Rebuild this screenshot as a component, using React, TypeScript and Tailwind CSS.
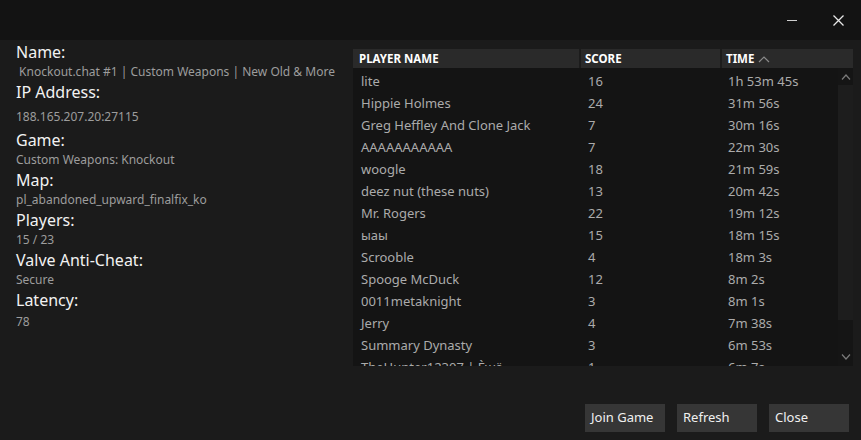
import React from "react";

const players: [string, number, string][] = [
  ["lite", 16, "1h 53m 45s"],
  ["Hippie Holmes", 24, "31m 56s"],
  ["Greg Heffley And Clone Jack", 7, "30m 16s"],
  ["AAAAAAAAAAA", 7, "22m 30s"],
  ["woogle", 18, "21m 59s"],
  ["deez nut (these nuts)", 13, "20m 42s"],
  ["Mr. Rogers", 22, "19m 12s"],
  ["ыаы", 15, "18m 15s"],
  ["Scrooble", 4, "18m 3s"],
  ["Spooge McDuck", 12, "8m 2s"],
  ["0011metaknight", 3, "8m 1s"],
  ["Jerry", 4, "7m 38s"],
  ["Summary Dynasty", 3, "6m 53s"],
  ["TheHunter12307 | Ѐѡӧ", 1, "6m 7s"],
];

const info: [string, string][] = [
  ["Name:", "\u00a0Knockout.chat #1 | Custom Weapons | New Old & More"],
  ["IP Address:", "188.165.207.20:27115"],
  ["Game:", "Custom Weapons: Knockout"],
  ["Map:", "pl_abandoned_upward_finalfix_ko"],
  ["Players:", "15 / 23"],
  ["Valve Anti-Cheat:", "Secure"],
  ["Latency:", "78"],
];

function InfoPanel() {
  return (
    <div className="w-[353px] shrink-0 pl-[16px] pt-[2px] flex flex-col">
      {info.map(([label, value], i) => (
        <div key={label} className="flex flex-col">
          <div className="text-[16px] leading-[20px] text-[#f2f2f2]">{label}</div>
          <div
            className={`text-[12px] leading-[20px] text-[#9d9d9d] whitespace-nowrap ${
              i === 1 ? "mt-[5px] mb-[3px]" : ""
            } ${i === 6 ? "mt-[2px]" : ""}`}
          >
            {value}
          </div>
        </div>
      ))}
    </div>
  );
}

function PlayerTable() {
  return (
    <div className="w-[500px] shrink-0 mt-[9px] h-[317px] flex flex-col bg-[#141414]">
      <div className="flex h-[19px] bg-[#2a2a2a] text-[11.5px] font-bold text-white leading-[19px]">
        <div className="w-[228px] pl-[6px] border-r-2 border-[#1c1c1c]">PLAYER NAME</div>
        <div className="w-[141px] pl-[4px] border-r-2 border-[#1c1c1c]">SCORE</div>
        <div className="flex-1 pl-[4px] flex items-center gap-[4px]">
          TIME
          <svg width="12" height="8" viewBox="0 0 12 8" className="text-[#8a8a8a]">
            <path d="M1 7 L6 2 L11 7" fill="none" stroke="currentColor" strokeWidth="1.2" />
          </svg>
        </div>
      </div>
      <div className="flex flex-1 overflow-hidden">
        <div className="flex-1 overflow-hidden text-[13px] text-[#ababab] pt-[2px]">
          {players.map(([name, score, time]) => (
            <div key={name} className="flex h-[22px] items-center leading-[22px]">
              <div className="w-[228px] pl-[8px] whitespace-nowrap">{name}</div>
              <div className="w-[141px] pl-[7px]">{score}</div>
              <div className="flex-1 pl-[6px] whitespace-nowrap">{time}</div>
            </div>
          ))}
        </div>
        <div className="w-[15px] flex flex-col items-center bg-[#151515]">
          <div className="h-[17px] flex items-center justify-center">
            <svg width="10" height="6" viewBox="0 0 10 6" className="text-[#7a7a7a]">
              <path d="M1 5.5 L5 1 L9 5.5" fill="none" stroke="currentColor" strokeWidth="1.2" />
            </svg>
          </div>
          <div className="w-full h-[235px] bg-[#1d1d1d]" />
          <div className="flex-1" />
          <div className="h-[22px] flex items-start justify-center pt-[10px]">
            <svg width="10" height="6" viewBox="0 0 10 6" className="text-[#7a7a7a]">
              <path d="M1 0.5 L5 5 L9 0.5" fill="none" stroke="currentColor" strokeWidth="1.2" />
            </svg>
          </div>
        </div>
      </div>
    </div>
  );
}

export default function App() {
  return (
    <div
      className="w-[861px] h-[440px] bg-[#1b1b1b] flex flex-col overflow-hidden"
      style={{ fontFamily: '"Noto Sans", "Open Sans", sans-serif' }}
    >
      <div className="h-[40px] bg-[#131313] flex justify-end items-center">
        <div className="w-[46px] h-[40px] flex items-center justify-center">
          <div className="w-[10px] h-[1px] bg-[#cfcfcf]" />
        </div>
        <div className="w-[46px] h-[40px] flex items-center justify-center">
          <svg width="11" height="11" viewBox="0 0 11 11">
            <path d="M0.5 0.5 L10.5 10.5 M10.5 0.5 L0.5 10.5" stroke="#e8e8e8" strokeWidth="1.3" />
          </svg>
        </div>
      </div>
      <div className="flex">
        <InfoPanel />
        <PlayerTable />
      </div>
      <div className="flex justify-end gap-[12px] pr-[12px] mt-[38px]">
        {["Join Game", "Refresh", "Close"].map((b) => (
          <button
            key={b}
            className="w-[80px] h-[28px] bg-[#363636] text-[13px] text-[#f0f0f0] text-left pl-[6px]"
          >
            {b}
          </button>
        ))}
      </div>
    </div>
  );
}
